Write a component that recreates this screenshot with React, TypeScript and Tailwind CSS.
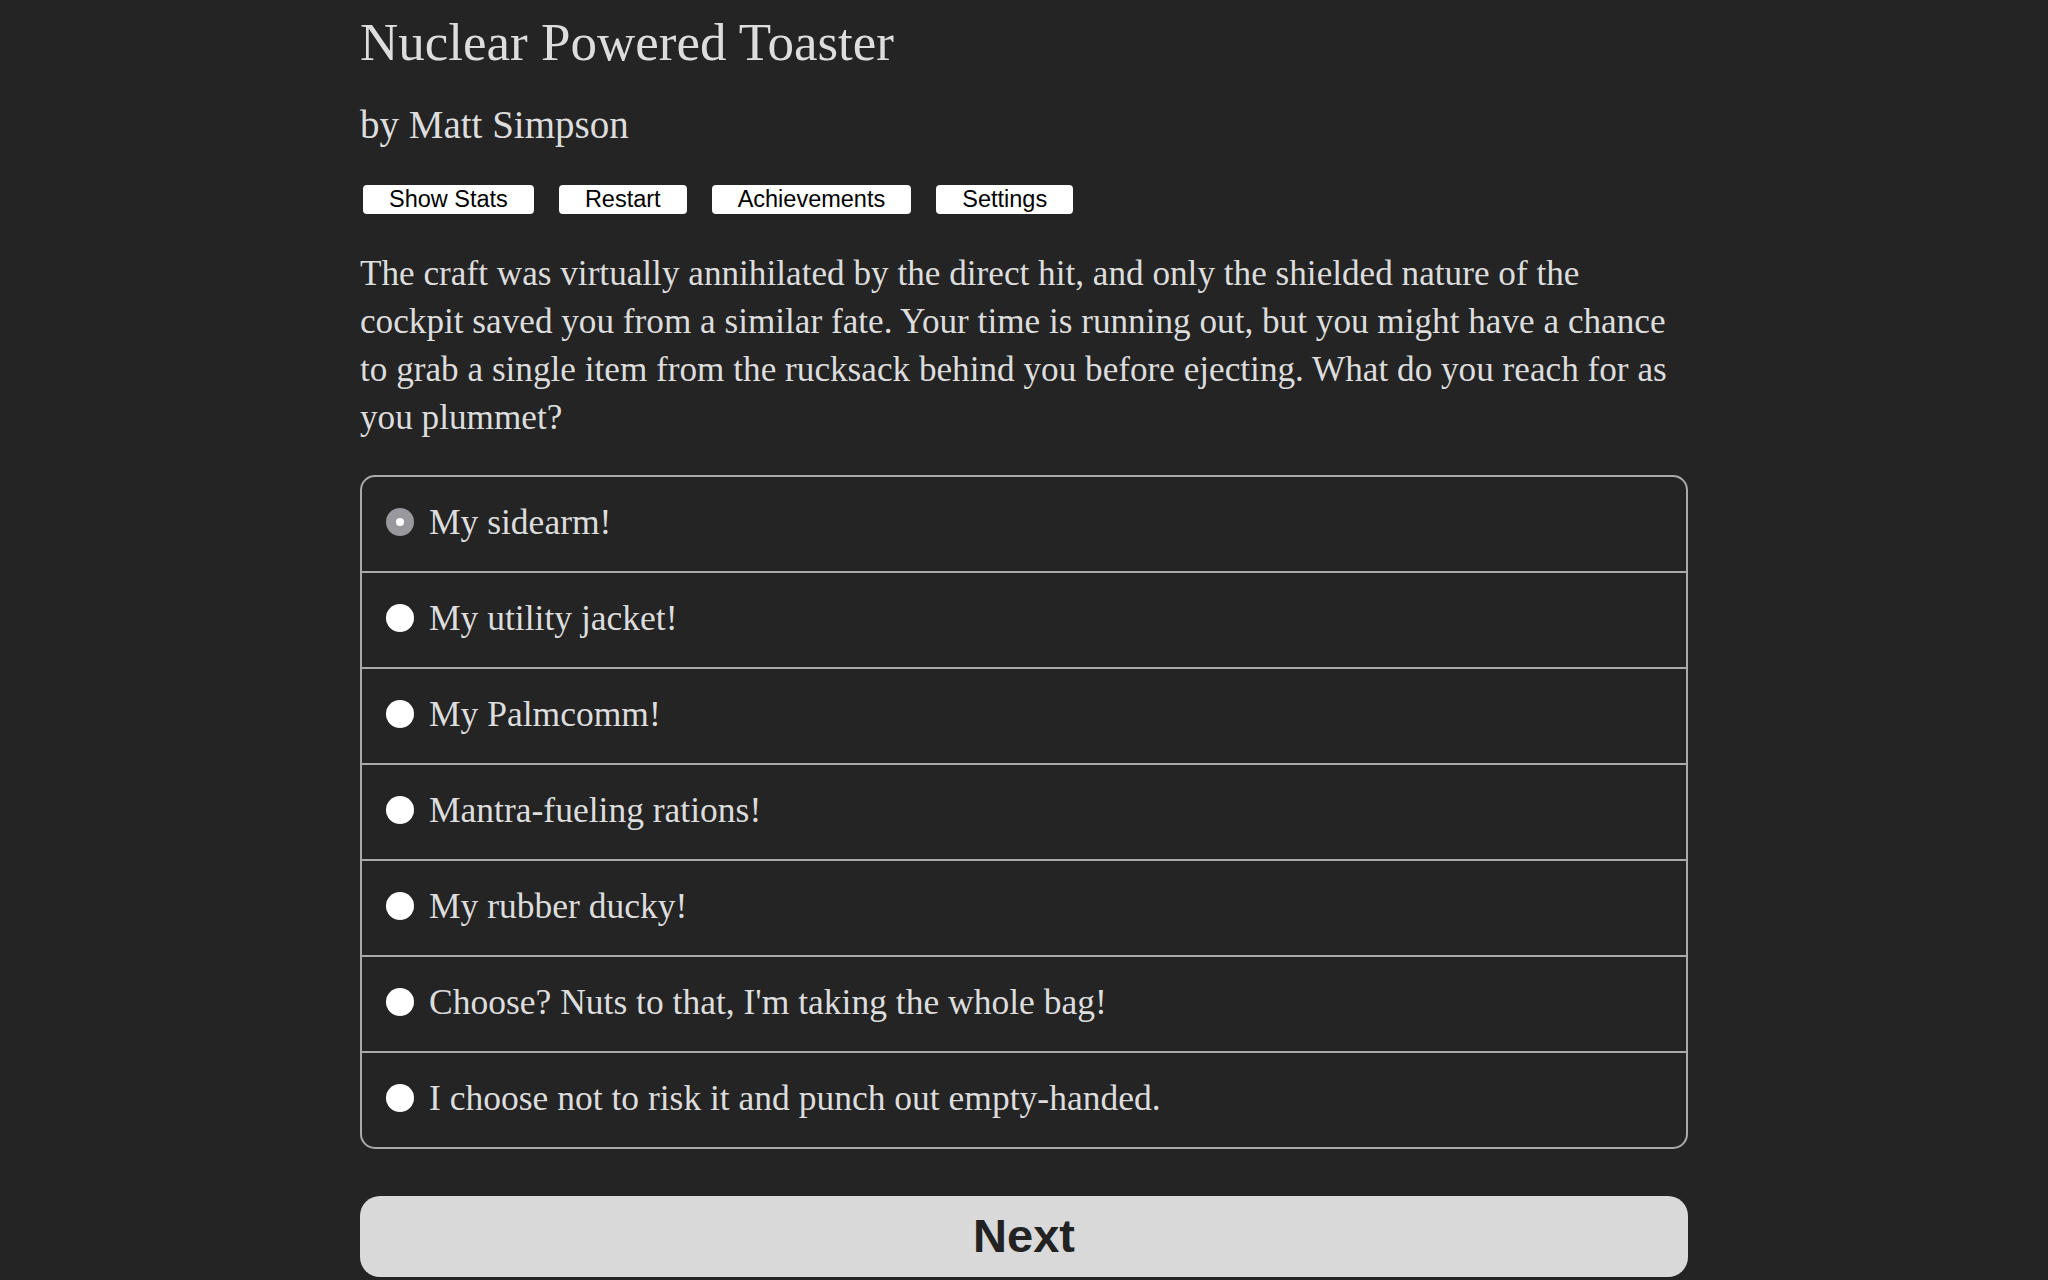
import React, { useState } from 'react';

const choices = [
    'My sidearm!',
    'My utility jacket!',
    'My Palmcomm!',
    'Mantra-fueling rations!',
    'My rubber ducky!',
    "Choose? Nuts to that, I'm taking the whole bag!",
    'I choose not to risk it and punch out empty-handed.',
];

const toolbar = ['Show Stats', 'Restart', 'Achievements', 'Settings'];

// Story passage, broken the way the reader lays it out
const passage = [
    'The craft was virtually annihilated by the direct hit, and only the shielded nature of the',
    'cockpit saved you from a similar fate. Your time is running out, but you might have a chance',
    'to grab a single item from the rucksack behind you before ejecting. What do you reach for as',
    'you plummet?',
];

const Radio: React.FC<{ checked: boolean }> = ({ checked }) =>
    checked ? (
        <span className="flex h-[28px] w-[28px] shrink-0 items-center justify-center rounded-full bg-[#98989d]">
            <span className="h-[8px] w-[8px] rounded-full bg-white" />
        </span>
    ) : (
        <span className="h-[28px] w-[28px] shrink-0 rounded-full bg-white" />
    );

export default function App() {
    const [selected, setSelected] = useState(0);

    return (
        <div className="min-h-[1280px] w-full bg-[#242424] text-[#dddddd] [font-family:'Liberation_Serif',serif]">
            <div className="mx-auto w-[1328px]">
                <h1 className="pt-[12px] text-[53px] leading-[60px] font-normal">Nuclear Powered Toaster</h1>
                <h2 className="mt-[29px] text-[39px] leading-[48px] font-normal">by Matt Simpson</h2>

                <div className="mt-[36px] ml-[3px] flex gap-[25px]">
                    {toolbar.map(label => (
                        <button
                            key={label}
                            className="h-[29px] rounded-[4px] bg-white px-[26px] text-[23.5px] leading-[29px] text-black [font-family:'Liberation_Sans',Arial,sans-serif]"
                        >
                            {label}
                        </button>
                    ))}
                </div>

                <p className="mt-[36px] text-[35.2px] leading-[48px]">
                    {passage.map((line, i) => (
                        <span key={i} className="block whitespace-nowrap">
                            {line}
                        </span>
                    ))}
                </p>

                <ul className="mt-[33px] rounded-[15px] border-2 border-[#aaaaaa]">
                    {choices.map((choice, i) => (
                        <li
                            key={choice}
                            onClick={() => setSelected(i)}
                            className={`flex cursor-pointer items-center gap-[15px] pl-[24px] pb-[5px] ${
                                i > 0 ? 'h-[96px] border-t-2 border-[#aaaaaa]' : 'h-[94px]'
                            }`}
                        >
                            <Radio checked={selected === i} />
                            <span className="whitespace-nowrap text-[35.5px] leading-[48px]">{choice}</span>
                        </li>
                    ))}
                </ul>

                <button className="mt-[47px] h-[81px] w-full rounded-[20px] bg-[#d9d9d9] text-[47px] font-bold text-[#222222] [font-family:'Liberation_Sans',Arial,sans-serif]">
                    Next
                </button>
            </div>
        </div>
    );
}
